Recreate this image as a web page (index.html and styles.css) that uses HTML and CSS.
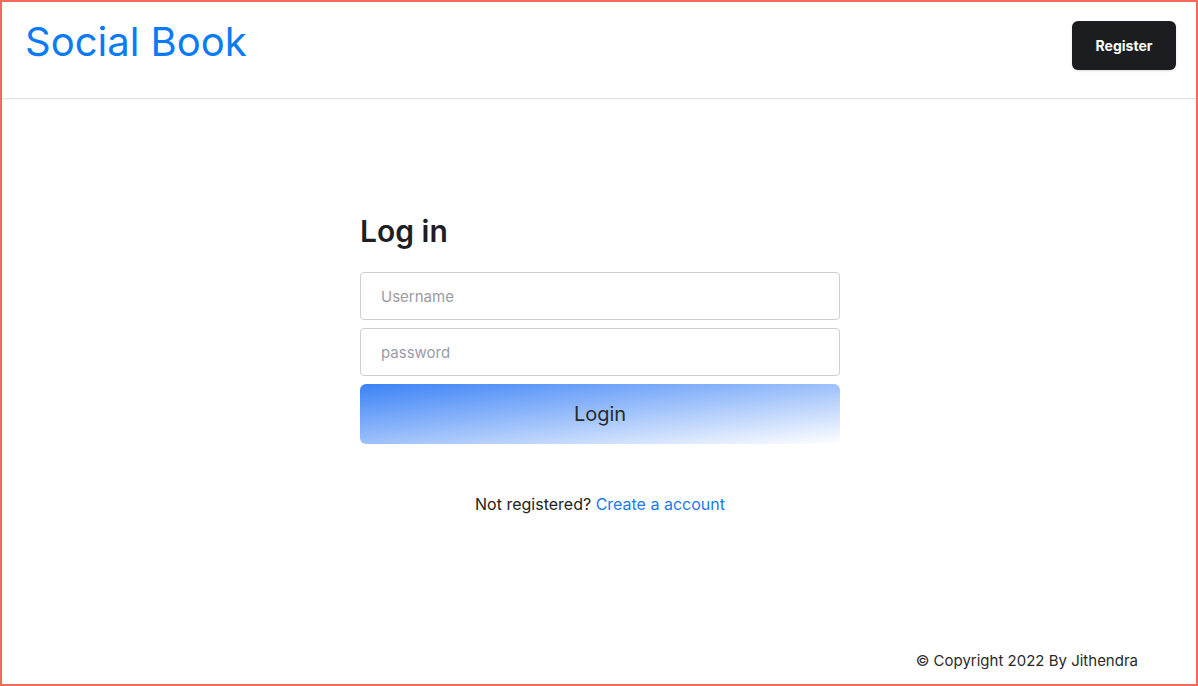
FILE: index.html
```html
<!DOCTYPE html>
<html lang="en">
<head>
<meta charset="utf-8">
<title>Social Book</title>
<link rel="stylesheet" href="styles.css">
</head>
<body>
<div class="frame">
  <header class="header">
    <a class="logo" href="#">Social Book</a>
    <button class="register-btn" type="button">Register</button>
  </header>
  <main class="main">
    <form class="login-form">
      <h1 class="title">Log in</h1>
      <input class="field" type="text" placeholder="Username">
      <input class="field" type="password" placeholder="password">
      <button class="login-btn" type="button">Login</button>
      <p class="signup">Not registered? <a href="#">Create a account</a></p>
    </form>
  </main>
  <footer class="footer">© Copyright 2022 By Jithendra</footer>
</div>
</body>
</html>
```

FILE: styles.css
```css
* { box-sizing: border-box; }
html, body { margin: 0; padding: 0; }
body {
  font-family: Inter, "Noto Sans", "Liberation Sans", sans-serif;
  color: #212529;
  background: #fff;
}
.frame {
  width: 1198px;
  height: 686px;
  border: 2px solid #f26b5a;
  display: flex;
  flex-direction: column;
  overflow: hidden;
}
.header {
  height: 97px;
  flex: none;
  display: flex;
  align-items: center;
  justify-content: space-between;
  padding: 0 20px 0 23px;
  border-bottom: 1px solid #e2e2e2;
  box-shadow: 0 1px 2px rgba(0,0,0,0.05);
}
.logo {
  font-size: 40px;
  font-weight: 400;
  color: #0b7bf5;
  text-decoration: none;
  margin-top: -17px;
  letter-spacing: 0;
}
.register-btn {
  width: 104px;
  height: 49px;
  margin-top: -10px;
  background: #1c1d21;
  color: #fff;
  border: none;
  border-radius: 6px;
  font-family: inherit;
  font-size: 14px;
  font-weight: 700;
  box-shadow: 0 1px 2px rgba(0,0,0,0.15);
}
.main {
  flex: 1;
  display: flex;
  justify-content: center;
  padding-top: 114px;
  padding-left: 2px;
}
.login-form {
  width: 480px;
  display: flex;
  flex-direction: column;
}
.title {
  margin: 0 0 23px;
  font-size: 30px;
  font-weight: 600;
  line-height: 36px;
  color: #1e1f22;
}
.field {
  height: 48px;
  border: 1px solid #cfcfd3;
  border-radius: 4px;
  padding: 0 20px;
  font-family: inherit;
  font-size: 15px;
  margin-bottom: 8px;
  color: #212529;
}
.field::placeholder { color: #9b9ba4; }
.login-btn {
  height: 60px;
  border: none;
  border-radius: 6px;
  background: linear-gradient(to bottom right, #3b82f6, #ffffff);
  font-family: inherit;
  font-size: 20px;
  color: #2a2a2e;
}
.signup {
  margin: 50px 0 0;
  text-align: center;
  font-size: 16px;
  color: #222;
}
.signup a {
  color: #1a7af0;
  text-decoration: none;
}
.footer {
  flex: none;
  height: 50px;
  text-align: right;
  padding-top: 17px;
  padding-right: 58px;
  font-size: 15px;
  color: #2a2a2a;
}
```
